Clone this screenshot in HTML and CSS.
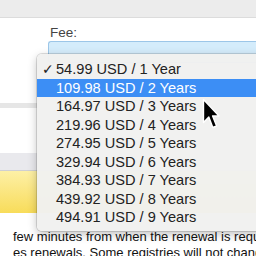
FILE: index.html
```html
<!DOCTYPE html>
<html>
<head>
<meta charset="utf-8">
<link rel="stylesheet" href="styles.css">
</head>
<body>
<div class="page">
  <div class="topbar"></div>
  <div class="form">
    <div class="label">Fee:</div>
    <div class="select"></div>
  </div>
  <div class="strip"></div>
  <div class="band"></div>
  <div class="yellow"></div>
  <p class="note">few minutes from when the renewal is requested. Some registrars<br>es renewals. Some registries will not change the expiration date</p>

  <ul class="menu">
    <li><span class="check">✓</span><span class="t">54.99 USD / 1 Year</span></li>
    <li class="on"><span class="check"></span><span class="t">109.98 USD / 2 Years</span></li>
    <li><span class="check"></span><span class="t">164.97 USD / 3 Years</span></li>
    <li><span class="check"></span><span class="t">219.96 USD / 4 Years</span></li>
    <li><span class="check"></span><span class="t">274.95 USD / 5 Years</span></li>
    <li><span class="check"></span><span class="t">329.94 USD / 6 Years</span></li>
    <li><span class="check"></span><span class="t">384.93 USD / 7 Years</span></li>
    <li><span class="check"></span><span class="t">439.92 USD / 8 Years</span></li>
    <li><span class="check"></span><span class="t">494.91 USD / 9 Years</span></li>
  </ul>

  <svg class="cursor" width="18" height="32" viewBox="0 0 18 32">
    <path d="M1.5 1.5 L1.5 24.5 L6.8 19 L10.8 29.5 L14.6 28 L10.6 18 L17 18 Z" fill="#000" stroke="#fff" stroke-width="1.4" stroke-linejoin="round"/>
  </svg>
</div>
</body>
</html>
```

FILE: styles.css
```css
html, body {
  margin: 0;
  padding: 0;
  background: #fff;
}
.page {
  position: relative;
  width: 256px;
  height: 256px;
  overflow: hidden;
  font-family: "Liberation Sans", Arial, sans-serif;
}
.topbar {
  height: 17px;
  background: #ececec;
  border-bottom: 1px solid #dcdcdc;
}
.form {
  padding-left: 48px;
  padding-top: 7px;
}
.label {
  padding-left: 2px;
  font-size: 13.5px;
  line-height: 16px;
  color: #444;
}
.select {
  height: 22px;
  box-sizing: border-box;
  border: 1px solid #9cc6e8;
  border-right: none;
  background: #d4ecfb;
  border-radius: 3px 0 0 3px;
}
.strip {
  margin-top: 40px;
  height: 5px;
  background: #e6e6e6;
}
.band {
  margin-top: 45px;
  height: 17px;
  background: #e9e9ed;
  border-bottom: 1px solid #cfcfd2;
}
.yellow {
  height: 42px;
  background: linear-gradient(#fdf0a6, #f8dc5a);
}
.note {
  margin: 16px 0 0 13px;
  width: 460px;
  font-size: 13px;
  line-height: 16px;
  color: #111;
  white-space: nowrap;
}
.menu {
  position: absolute;
  left: 37px;
  top: 54px;
  width: 240px;
  margin: 0;
  padding: 6px 0 4px;
  list-style: none;
  background: rgba(241, 241, 239, 0.97);
  border-radius: 5px;
  box-shadow: 0 0 0 1px rgba(0,0,0,0.12), 0 3px 10px rgba(0,0,0,0.25);
}
.menu li {
  display: flex;
  height: 18.5px;
  line-height: 18.5px;
  font-size: 14.6px;
  color: #222;
}
.menu li.on {
  background: #3c8ef5;
  color: #fff;
}
.check {
  width: 19px;
  padding-left: 5px;
  box-sizing: border-box;
  font-family: "DejaVu Sans", sans-serif;
  font-size: 14px;
}
.cursor {
  position: absolute;
  left: 202px;
  top: 98px;
}
```
